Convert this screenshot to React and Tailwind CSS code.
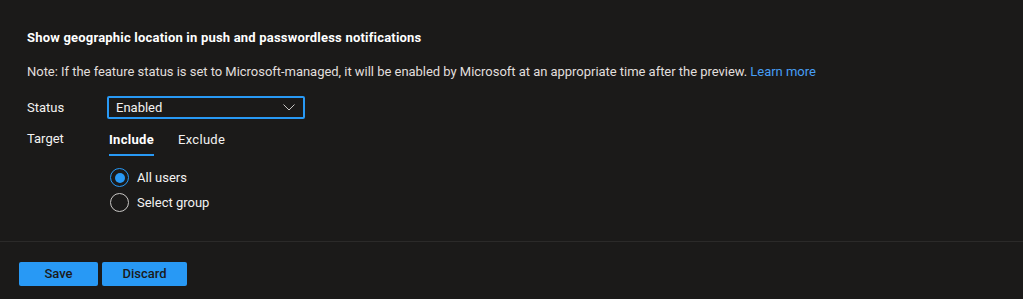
import React, { useState } from 'react';

export default function App() {
  const [status] = useState('Enabled');
  const [tab, setTab] = useState('include');
  const [target, setTarget] = useState('all');

  return (
    <div className="w-[1023px] h-[299px] bg-[#1b1a19] text-[#f3f2f1] text-[13px] flex flex-col" style={{ fontFamily: '"Segoe UI", Roboto, "Liberation Sans", sans-serif' }}>
      <div className="px-[27px] pt-[28px] h-[242px] border-b border-[#2b2a29]">
        <h2 className="font-bold text-[13px] leading-[20px] tracking-[0.2px] text-white">
          Show geographic location in push and passwordless notifications
        </h2>
        <p className="mt-[14px] leading-[20px] tracking-[-0.03px] text-[#e1dfdd]">
          Note: If the feature status is set to Microsoft-managed, it will be enabled by Microsoft at an appropriate time after the preview.{' '}
          <a href="#" className="text-[#479ef5]">Learn more</a>
        </p>

        <div className="mt-[14px] flex items-center">
          <span className="w-[80px]">Status</span>
          <button className="w-[198px] h-[23px] border-2 border-[#2899f5] rounded-[2px] flex items-center justify-between pl-[7px] pr-[8px] text-left">
            <span>{status}</span>
            <svg width="12" height="7" viewBox="0 0 12 7" fill="none">
              <path d="M0.5 0.5l5.5 5.5 5.5-5.5" stroke="#c8c6c4" strokeWidth="1" />
            </svg>
          </button>
        </div>

        <div className="mt-[7px] flex items-start">
          <span className="w-[82px] leading-[26px]">Target</span>
          <div className="flex flex-col">
            <div className="flex gap-[24px] tracking-[0.3px]">
              <button onClick={() => setTab('include')} className={'h-[30px] leading-[26px] border-b-2 ' + (tab === 'include' ? 'border-[#2899f5] font-bold text-white' : 'border-transparent')}>
                Include
              </button>
              <button onClick={() => setTab('exclude')} className={'h-[30px] leading-[26px] border-b-2 ' + (tab === 'exclude' ? 'border-[#2899f5] font-bold text-white' : 'border-transparent')}>
                Exclude
              </button>
            </div>
            <div className="mt-[12px] ml-[1px] flex flex-col gap-[6px]">
              {[
                { id: 'all', label: 'All users' },
                { id: 'group', label: 'Select group' },
              ].map((opt) => (
                <label key={opt.id} className="flex items-center gap-[8px] cursor-pointer" onClick={() => setTarget(opt.id)}>
                  {target === opt.id ? (
                    <span className="w-[19px] h-[19px] rounded-full border border-[#2899f5] flex items-center justify-center">
                      <span className="w-[10px] h-[10px] rounded-full bg-[#2899f5]" />
                    </span>
                  ) : (
                    <span className="w-[19px] h-[19px] rounded-full border border-[#c8c6c4]" />
                  )}
                  <span className="leading-[19px]">{opt.label}</span>
                </label>
              ))}
            </div>
          </div>
        </div>
      </div>

      <div className="px-[19px] pt-[20px] flex gap-[4px]">
        <button className="w-[79px] h-[24px] rounded-[2px] bg-[#2899f5] text-[#1b1a19] font-medium">Save</button>
        <button className="w-[85px] h-[24px] rounded-[2px] bg-[#2899f5] text-[#1b1a19] font-medium">Discard</button>
      </div>
    </div>
  );
}
